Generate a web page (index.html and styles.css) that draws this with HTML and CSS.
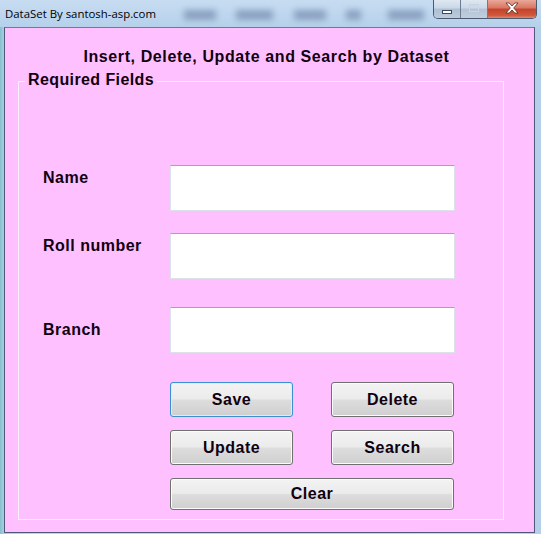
FILE: index.html
```html
<!DOCTYPE html>
<html>
<head>
<meta charset="utf-8">
<title>DataSet By santosh-asp.com</title>
<link rel="stylesheet" href="styles.css">
</head>
<body>
<div class="window">
  <div class="titlebar">
    <span class="title">DataSet By santosh-asp.com</span>
    <div class="blurs">
      <span class="blur b1"></span>
      <span class="blur b2"></span>
      <span class="blur b3"></span>
      <span class="blur b4"></span>
      <span class="blur b5"></span>
    </div>
    <div class="caption-buttons">
      <span class="cap cap-min">
        <svg width="12" height="6" viewBox="0 0 12 6"><rect x="1.5" y="1.5" width="9" height="3" fill="#fff" stroke="#3a4a5e" stroke-width="1"/></svg>
      </span>
      <span class="cap cap-max">
        <svg width="12" height="10" viewBox="0 0 12 10"><rect x="1.5" y="1.5" width="9" height="7" fill="none" stroke="#c8d6e4" stroke-width="1"/><rect x="2.5" y="2.5" width="7" height="1" fill="#c8d6e4"/></svg>
      </span>
      <span class="cap cap-close">
        <svg width="16" height="12" viewBox="0 0 16 12"><path d="M2 1h3.2l2.8 3 2.8-3H14l-4.3 5 4.3 5h-3.2L8 8 5.2 11H2l4.3-5z" fill="#fff" stroke="#5a2a20" stroke-width="0.8" stroke-linejoin="round"/></svg>
      </span>
    </div>
  </div>
  <div class="client">
    <h1 class="heading">Insert, Delete, Update and Search by Dataset</h1>
    <div class="group">
      <span class="legend">Required Fields</span>
      <div class="form">
        <div class="row row-name">
          <label class="label">Name</label>
          <input class="textbox" type="text">
        </div>
        <div class="row row-roll">
          <label class="label">Roll number</label>
          <input class="textbox" type="text">
        </div>
        <div class="row row-branch">
          <label class="label">Branch</label>
          <input class="textbox" type="text">
        </div>
        <div class="buttons">
          <button class="btn btn-focus">Save</button>
          <button class="btn">Delete</button>
          <button class="btn">Update</button>
          <button class="btn">Search</button>
          <button class="btn btn-wide">Clear</button>
        </div>
      </div>
    </div>
  </div>
</div>
</body>
</html>
```

FILE: styles.css
```css
* { box-sizing: border-box; }
html, body { margin: 0; padding: 0; }
body {
  width: 541px;
  height: 534px;
  overflow: hidden;
  font-family: "Liberation Sans", Arial, sans-serif;
}
.window {
  width: 541px;
  height: 534px;
  display: flex;
  flex-direction: column;
  background: linear-gradient(to right, #86bfcc 0px, #a9cfe4 4px, #bcd5ec 40px, #bfd6ed 500px, #b4cfe8 541px);
}
.titlebar {
  height: 27px;
  display: flex;
  align-items: flex-start;
  position: relative;
  background: linear-gradient(to bottom, #c7dcf1 0%, #bdd5ee 60%, #b7d0ea 100%);
}
.title {
  font-family: "Open Sans", "Noto Sans", sans-serif;
  font-size: 11.4px;
  line-height: 14px;
  color: #000;
  margin: 7px 0 0 5px;
  white-space: nowrap;
}
.blurs {
  display: flex;
  margin: 10px 0 0 0;
}
.blur {
  display: block;
  height: 10px;
  background: #8199b8;
  filter: blur(3px);
  opacity: 0.85;
}
.b1 { width: 32px; margin-left: 28px; }
.b2 { width: 37px; margin-left: 20px; }
.b3 { width: 32px; margin-left: 21px; }
.b4 { width: 15px; margin-left: 20px; }
.b5 { width: 36px; margin-left: 27px; }
.caption-buttons {
  position: absolute;
  top: 0;
  left: 433px;
  width: 104px;
  height: 19px;
  display: flex;
  border: 1px solid #4b5a6e;
  border-top: none;
  border-radius: 0 0 5px 5px;
  overflow: hidden;
}
.cap {
  display: flex;
  align-items: center;
  justify-content: center;
  height: 100%;
}
.cap-min {
  width: 27px;
  background: linear-gradient(to bottom, #dfe8f2 0%, #c9d7e6 45%, #aebfd3 50%, #bccbdc 100%);
  border-right: 1px solid #6d7c90;
  padding-top: 6px;
}
.cap-max {
  width: 27px;
  background: linear-gradient(to bottom, #dfe8f2 0%, #cbd8e7 45%, #b3c3d6 50%, #c1cfdf 100%);
  border-right: 1px solid #6d7c90;
  padding-bottom: 2px;
}
.cap-close {
  flex: 1;
  background: linear-gradient(to bottom, #e9a899 0%, #d97560 45%, #c4432a 50%, #d0573d 85%, #e08a6c 100%);
  padding-bottom: 2px;
}
.client {
  flex: 1;
  margin: 0 6px 1px 4px;
  border: 1px solid #4f5878;
  border-top-color: #8a6aa0;
  background: #ffc0ff;
  padding-top: 20px;
}
.heading {
  margin: 0;
  font-size: 16px;
  line-height: 18px;
  letter-spacing: 0.6px;
  font-weight: bold;
  text-align: center;
  color: #100010;
  padding-right: 6px;
}
.group {
  position: relative;
  margin: 15px 0 0 13px;
  width: 486px;
  height: 439px;
  border: 1px solid #f8f0f8;
}
.legend {
  position: absolute;
  top: -11px;
  left: 6px;
  padding: 0 3px;
  background: #ffc0ff;
  font-size: 16px;
  line-height: 18px;
  letter-spacing: 0.4px;
  font-weight: bold;
  color: #100010;
}
.form {
  padding: 83px 0 0 24px;
}
.row {
  display: flex;
  align-items: flex-start;
}
.row-roll { margin-top: 22px; }
.row-branch { margin-top: 28px; }
.label {
  width: 127px;
  font-size: 16px;
  line-height: 18px;
  letter-spacing: 0.5px;
  font-weight: bold;
  color: #100010;
}
.row-name .label { margin-top: 4px; }
.row-roll .label { margin-top: 4px; }
.row-branch .label { margin-top: 14px; }
.textbox {
  width: 285px;
  height: 46px;
  margin: 0;
  border: 1px solid #dde2ea;
  border-top-color: #aaa0b0;
  background: #fff;
  padding: 0 4px;
  font: inherit;
  outline: none;
}
.buttons {
  margin: 29px 0 0 127px;
  display: grid;
  grid-template-columns: 123px 123px;
  column-gap: 38px;
  row-gap: 13px;
  grid-template-rows: 35px 35px 32px;
}
.btn {
  margin: 0;
  padding: 0;
  border: 1px solid #707070;
  border-radius: 3px;
  background: linear-gradient(to bottom, #f3f3f3 0%, #ebebeb 48%, #dddddd 52%, #cfcfcf 100%);
  box-shadow: inset 0 0 0 1px #fbfbfb;
  font-family: "Liberation Sans", Arial, sans-serif;
  font-size: 16px;
  letter-spacing: 0.5px;
  font-weight: bold;
  color: #100010;
}
.btn-focus {
  border-color: #3c8fd0;
  box-shadow: inset 0 0 0 1px #d8eefa;
}
.btn-wide {
  grid-column: 1 / 3;
}
```
